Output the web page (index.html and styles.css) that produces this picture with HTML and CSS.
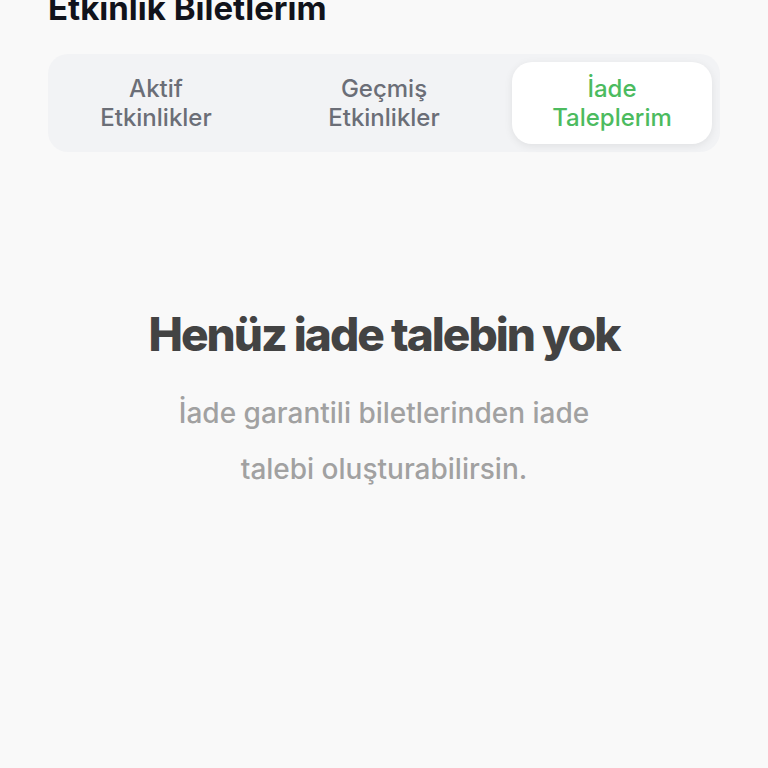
FILE: index.html
```html
<!DOCTYPE html>
<html lang="tr">
<head>
<meta charset="utf-8">
<link rel="stylesheet" href="styles.css">
</head>
<body>
<div class="page">
  <h1 class="title">Etkinlik Biletlerim</h1>
  <div class="tabs">
    <div class="tab">Aktif<br>Etkinlikler</div>
    <div class="tab">Geçmiş<br>Etkinlikler</div>
    <div class="tab active">İade<br>Taleplerim</div>
  </div>
  <div class="empty">
    <h2 class="empty-title">Henüz iade talebin yok</h2>
    <p class="empty-text">İade garantili biletlerinden iade<br>talebi oluşturabilirsin.</p>
  </div>
</div>
</body>
</html>
```
FILE: styles.css
```css
html, body {
  margin: 0;
  padding: 0;
  background: #f9f9f9;
  font-family: Inter, "Noto Sans", "Liberation Sans", sans-serif;
}
.page {
  width: 768px;
  height: 768px;
  overflow: hidden;
  padding: 0 48px;
  box-sizing: border-box;
}
.title {
  margin: -11px 0 0 0;
  font-size: 33px;
  line-height: 38px;
  font-weight: 700;
  color: #11131b;
  letter-spacing: 0;
}
.tabs {
  margin-top: 27px;
  display: grid;
  grid-template-columns: 200px 200px 200px;
  column-gap: 28px;
  padding: 8px;
  background: #f2f3f5;
  border-radius: 20px;
}
.tab {
  height: 82px;
  display: flex;
  align-items: center;
  justify-content: center;
  text-align: center;
  font-size: 24px;
  line-height: 29px;
  font-weight: 500;
  color: #6b6e77;
}
.tab.active {
  background: #ffffff;
  border-radius: 20px;
  color: #4cbb5f;
  box-shadow: 0 2px 8px rgba(0, 0, 0, 0.08);
}
.empty {
  text-align: center;
  padding-top: 155px;
}
.empty-title {
  margin: 0;
  font-size: 46px;
  line-height: 54px;
  font-weight: 800;
  letter-spacing: -2px;
  color: #434343;
}
.empty-text {
  margin: 24px 0 0 0;
  font-size: 28px;
  line-height: 56px;
  font-weight: 500;
  color: #a1a1a1;
}
```
